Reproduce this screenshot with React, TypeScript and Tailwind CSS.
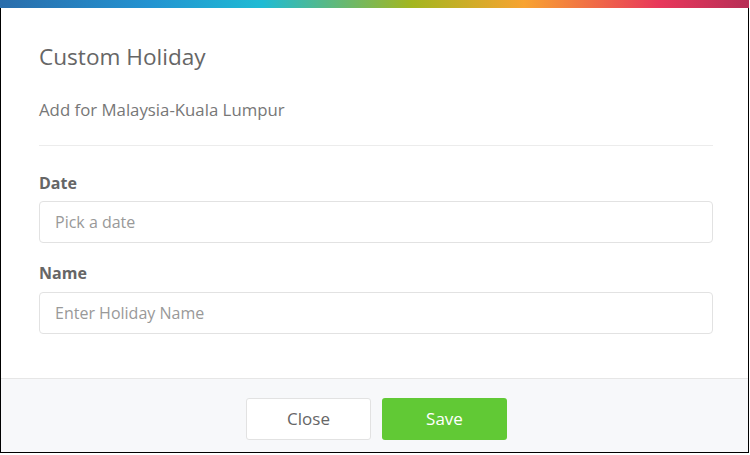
const App = () => {
  return (
    <div className="w-[750px] h-[455px] bg-white" style={{ fontFamily: '"Open Sans", "Liberation Sans", sans-serif' }}>
      <div className="w-[749px] h-[453px] flex flex-col border-x border-b border-black bg-white">
        {/* Top gradient bar */}
        <div className="h-[8px] -mx-px bg-[linear-gradient(to_right,#2a6dab_0%,#2393d1_20%,#1fbbd4_35%,#a3b61f_55%,#f8a331_70%,#e8375b_88%,#b72f57_100%)]" />

        {/* Body */}
        <div className="flex-1 pl-[38px] pr-[35px] pt-[33px]">
          <h2 className="text-[22.6px] leading-[32px] text-[#666] font-normal">Custom Holiday</h2>
          <p className="mt-[25px] text-[16.8px] leading-[24px] text-[#777]">Add for Malaysia-Kuala Lumpur</p>
          <div className="mt-[23px] h-px bg-[#ececec]" />

          <label className="block mt-[27px] text-[16px] leading-[20px] font-bold text-[#666]">Date</label>
          <input
            type="text"
            placeholder="Pick a date"
            className="mt-[8px] w-full h-[42px] rounded-[4px] border border-[#e2e2e2] px-[15px] text-[16px] text-[#666] placeholder:text-[#999] outline-none"
          />

          <label className="block mt-[20px] text-[16px] leading-[20px] font-bold text-[#666]">Name</label>
          <input
            type="text"
            placeholder="Enter Holiday Name"
            className="mt-[9px] w-full h-[42px] rounded-[4px] border border-[#e2e2e2] px-[15px] text-[16px] text-[#666] placeholder:text-[#999] outline-none"
          />
        </div>

        {/* Footer */}
        <div className="h-[74px] border-t border-[#e6e6e6] bg-[#f7f8fa] flex items-start justify-center gap-[11px] pt-[19px] pl-[4px]">
          <button className="w-[125px] h-[42px] rounded-[3px] border border-[#e2e2e2] bg-white text-[17px] text-[#666]">
            Close
          </button>
          <button className="w-[125px] h-[42px] rounded-[3px] bg-[#61c935] text-[17px] text-white">
            Save
          </button>
        </div>
      </div>
    </div>
  );
};

export default App;
